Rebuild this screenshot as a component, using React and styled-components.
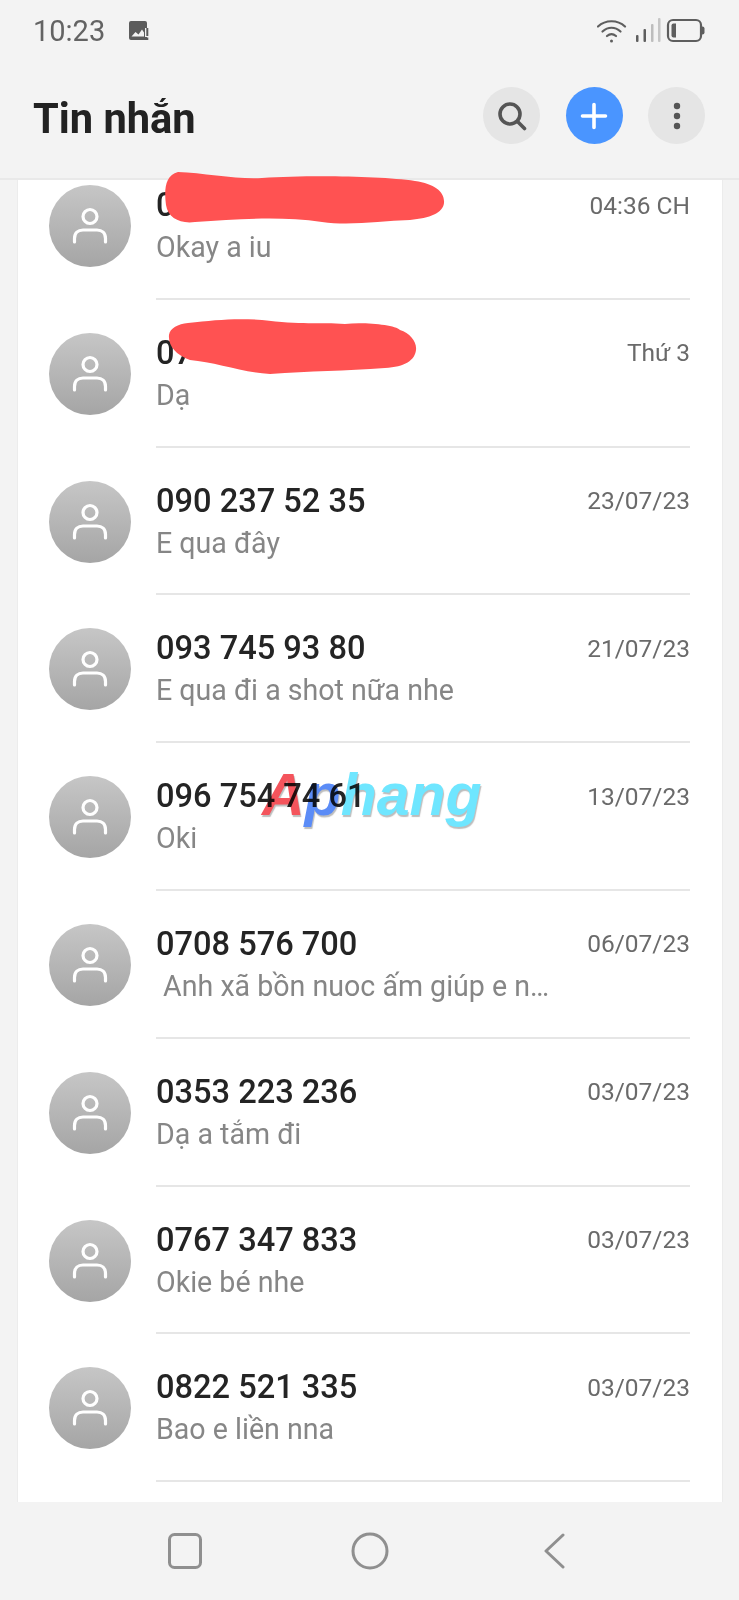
import React from "react";
import styled, { createGlobalStyle } from "styled-components";

const Global = createGlobalStyle`
  html, body { margin: 0; padding: 0; background: #f3f3f3; }
  * { box-sizing: border-box; }
`;

const Page = styled.div`
  position: relative;
  width: 739px;
  height: 1600px;
  overflow: hidden;
  display: flex;
  flex-direction: column;
  background: #f3f3f3;
  font-family: Roboto, "Liberation Sans", sans-serif;
`;

const Header = styled.header`
  height: 180px;
  flex: none;
  display: flex;
  flex-direction: column;
  border-bottom: 2px solid #e9e9e9;
`;

const StatusBar = styled.div`
  height: 62px;
  flex: none;
  padding: 0 34px 0 33px;
  display: flex;
  align-items: center;
  color: #636363;
`;

const Clock = styled.span`
  font-size: 29px;
  line-height: 62px;
  margin-right: 24px;
`;

const StatusIcons = styled.div`
  margin-left: auto;
  display: flex;
  align-items: center;
`;

const Toolbar = styled.div`
  flex: 1;
  padding: 0 34px 0 33px;
  display: flex;
  align-items: center;
  justify-content: space-between;
  margin-top: -9px;
`;

const Title = styled.h1`
  margin: 5px 0 0;
  font-size: 41.6px;
  font-weight: 700;
  color: #222;
`;

const Actions = styled.div`
  display: flex;
  gap: 25.5px;
`;

const RoundButton = styled.button`
  width: 57px;
  height: 57px;
  padding: 0;
  border: 0;
  border-radius: 50%;
  display: flex;
  align-items: center;
  justify-content: center;
  background: ${(p) => (p.$primary ? "#4a95ff" : "#e5e5e5")};
`;

const Card = styled.main`
  flex: none;
  height: 1322px;
  margin: 0 16px 0 17px;
  background: #fff;
  overflow: hidden;
  border-left: 1px solid #ececec;
  border-right: 1px solid #ececec;
`;

const List = styled.ul`
  list-style: none;
  margin: -28px 0 0;
  padding: 0;
`;

const Row = styled.li`
  height: 147.8px;
  display: flex;
  padding-left: 31px;
  padding-right: 32px;
`;

const Avatar = styled.div`
  width: 82px;
  height: 82px;
  flex: none;
  margin-top: 33px;
  border-radius: 50%;
  display: flex;
  align-items: center;
  justify-content: center;
  background: linear-gradient(#c6c6c6, #a5a5a5);
`;

const RowBody = styled.div`
  flex: 1;
  margin-left: 25px;
  padding-top: 32px;
  border-bottom: 2px solid #e6e6e6;
`;

const TopLine = styled.div`
  display: flex;
  justify-content: space-between;
  align-items: center;
  height: 42px;
`;

const Name = styled.span`
  font-size: 32.6px;
  font-weight: 500;
  color: #242424;
`;

const When = styled.span`
  font-size: 24.5px;
  color: #6a6a6a;
`;

const Preview = styled.div`
  margin-top: -1px;
  font-size: 28.6px;
  line-height: 44px;
  color: #868686;
  white-space: pre;
`;

const NavBar = styled.nav`
  flex: 1;
  display: grid;
  grid-template-columns: 185px 185px 185px;
  justify-content: start;
  padding-left: 92px;
  align-items: center;
  justify-items: center;
`;

const Overlay = styled.svg`
  position: absolute;
  left: 0;
  top: 0;
  pointer-events: none;
`;

const Watermark = styled.div`
  position: absolute;
  left: 262px;
  top: 762px;
  font-family: "Liberation Sans", Arial, sans-serif;
  font-size: 59px;
  line-height: 66px;
  font-weight: 700;
  font-style: italic;
  text-shadow: 1px 2px 1px rgba(90, 90, 90, 0.4);
  mix-blend-mode: multiply;
  pointer-events: none;
`;

const Mark = styled.span`
  color: ${(p) => p.$c};
`;

const rows = [
  ["0", "Okay a iu", "04:36 CH"],
  ["07", "Dạ", "Thứ 3"],
  ["090 237 52 35", "E qua đây", "23/07/23"],
  ["093 745 93 80", "E qua đi a shot nữa nhe", "21/07/23"],
  ["096 754 74 61", "Oki", "13/07/23"],
  ["0708 576 700", " Anh xã bồn nuoc ấm giúp e n…", "06/07/23"],
  ["0353 223 236", "Dạ a tắm đi", "03/07/23"],
  ["0767 347 833", "Okie bé nhe", "03/07/23"],
  ["0822 521 335", "Bao e liền nna", "03/07/23"],
  ["", "", ""],
];

const PersonIcon = () => (
  <svg width="36" height="38" viewBox="0 0 36 38" fill="none" stroke="#fff" strokeWidth="3.2" strokeLinecap="round">
    <circle cx="18" cy="9.5" r="7" />
    <path d="M2.5 35v-3.5C2.5 26 6 23 11 23h14c5 0 8.500 3 8.500 8.500V35" />
  </svg>
);

const ImageAlert = () => (
  <svg width="20" height="20" viewBox="0 0 20 20">
    <path d="M2 0h14a2 2 0 0 1 2 2v5h-2v9h2v3H2a2 2 0 0 1-2-2V2a2 2 0 0 1 2-2z" fill="#5c5c5c" />
    <path d="M2.500 15.500l4-4.500 3 2.500 3.500-5 2 3v4z" fill="#f3f3f3" />
    <rect x="17.300" y="7" width="2" height="8" fill="#5c5c5c" />
    <rect x="17.300" y="16.500" width="2" height="2.500" fill="#5c5c5c" />
  </svg>
);

const StatusGlyphs = () => (
  <svg width="108" height="26" viewBox="0 0 108 26" fill="none">
    <g stroke="#5e5e5e" strokeWidth="2.200" strokeLinecap="round">
      <path d="M1 8.500C8.500 1.500 20.500 1.500 28 8.500" />
      <path d="M5.500 13.500C11 8.500 18 8.500 23.500 13.500" />
      <path d="M10 18c3-2.500 6-2.500 9 0" />
    </g>
    <circle cx="14.500" cy="23" r="1.500" fill="#5e5e5e" />
    <rect x="39" y="17" width="2.500" height="7" rx="1" fill="#5e5e5e" />
    <rect x="46.500" y="11" width="2.500" height="13" rx="1" fill="#5e5e5e" />
    <rect x="54" y="6" width="2.500" height="18" rx="1" fill="#bdbdbd" />
    <rect x="61" y="0" width="2.500" height="24" rx="1" fill="#c6c6c6" />
    <rect x="71" y="2" width="33" height="21" rx="5" stroke="#5e5e5e" strokeWidth="2.200" />
    <path d="M74.500 7.500a2 2 0 0 1 2-2h2.500v14h-2.500a2 2 0 0 1-2-2z" fill="#5e5e5e" />
    <path d="M105 8.500h.500a2 2 0 0 1 2 2v4a2 2 0 0 1-2 2h-.500z" fill="#5e5e5e" />
  </svg>
);

const SearchIcon = () => (
  <svg width="30" height="30" viewBox="0 0 30 30" fill="none" stroke="#555" strokeWidth="3.600" strokeLinecap="round">
    <circle cx="13" cy="13" r="10" />
    <path d="M21 21l6.500 6.500" />
  </svg>
);

const PlusIcon = () => (
  <svg width="28" height="28" viewBox="0 0 28 28" stroke="#fff" strokeWidth="3.600" strokeLinecap="round">
    <path d="M14 2.500v23M2.500 14h23" />
  </svg>
);

const KebabIcon = () => (
  <svg width="8" height="28" viewBox="0 0 8 28" fill="#555">
    <circle cx="4" cy="4" r="3.200" />
    <circle cx="4" cy="14" r="3.200" />
    <circle cx="4" cy="24" r="3.200" />
  </svg>
);

const NavSquare = () => (
  <svg width="34" height="36" viewBox="0 0 34 36" fill="none" stroke="#8f8f8f" strokeWidth="3">
    <rect x="1.500" y="1.500" width="31" height="33" rx="5" />
  </svg>
);

const NavCircle = () => (
  <svg width="38" height="38" viewBox="0 0 38 38" fill="none" stroke="#8f8f8f" strokeWidth="3">
    <circle cx="19" cy="19" r="17" />
  </svg>
);

const NavBack = () => (
  <svg width="21" height="36" viewBox="0 0 21 36" fill="none" stroke="#8f8f8f" strokeWidth="3" strokeLinecap="round" strokeLinejoin="round">
    <path d="M19 2L2 18l17 16" />
  </svg>
);

export default function App() {
  return (
    <Page>
      <Global />
      <Header>
        <StatusBar>
          <Clock>10:23</Clock>
          <ImageAlert />
          <StatusIcons>
            <StatusGlyphs />
          </StatusIcons>
        </StatusBar>
        <Toolbar>
          <Title>Tin nhắn</Title>
          <Actions>
            <RoundButton aria-label="Tìm kiếm"><SearchIcon /></RoundButton>
            <RoundButton $primary aria-label="Thêm"><PlusIcon /></RoundButton>
            <RoundButton aria-label="Khác"><KebabIcon /></RoundButton>
          </Actions>
        </Toolbar>
      </Header>
      <Card>
        <List>
          {rows.map(([name, preview, when], i) => (
            <Row key={i}>
              <Avatar><PersonIcon /></Avatar>
              <RowBody>
                <TopLine>
                  <Name>{name}</Name>
                  <When>{when}</When>
                </TopLine>
                <Preview>{preview}</Preview>
              </RowBody>
            </Row>
          ))}
        </List>
      </Card>
      <NavBar>
        <NavSquare />
        <NavCircle />
        <NavBack />
      </NavBar>
      <Overlay width="739" height="1600" viewBox="0 0 739 1600">
        <path
          d="M178 172C205 173 240 180 262 178C310 175 380 176 415 181C435 184 445 192 444 203C443 213 430 218 410 220C380 221 350 226 322 222C280 216 240 219 195 222C180 224 168 218 166 205C164 190 165 175 178 172Z"
          fill="#ff5252"
        />
        <path
          d="M188 323C215 320 235 318 262 320C300 325 320 322 345 324C365 322 395 325 400 330C410 333 417 342 416 350C415 360 405 367 385 368C345 371 310 371 270 374C245 373 215 362 190 360C175 355 168 345 169 335C170 328 178 324 188 323Z"
          fill="#ff5252"
        />
      </Overlay>
      <Watermark aria-hidden="true">
        <Mark $c="#f4545c">A</Mark>
        <Mark $c="#5b8cf7">p</Mark>
        <Mark $c="#6fe6ff">hang</Mark>
      </Watermark>
    </Page>
  );
}
